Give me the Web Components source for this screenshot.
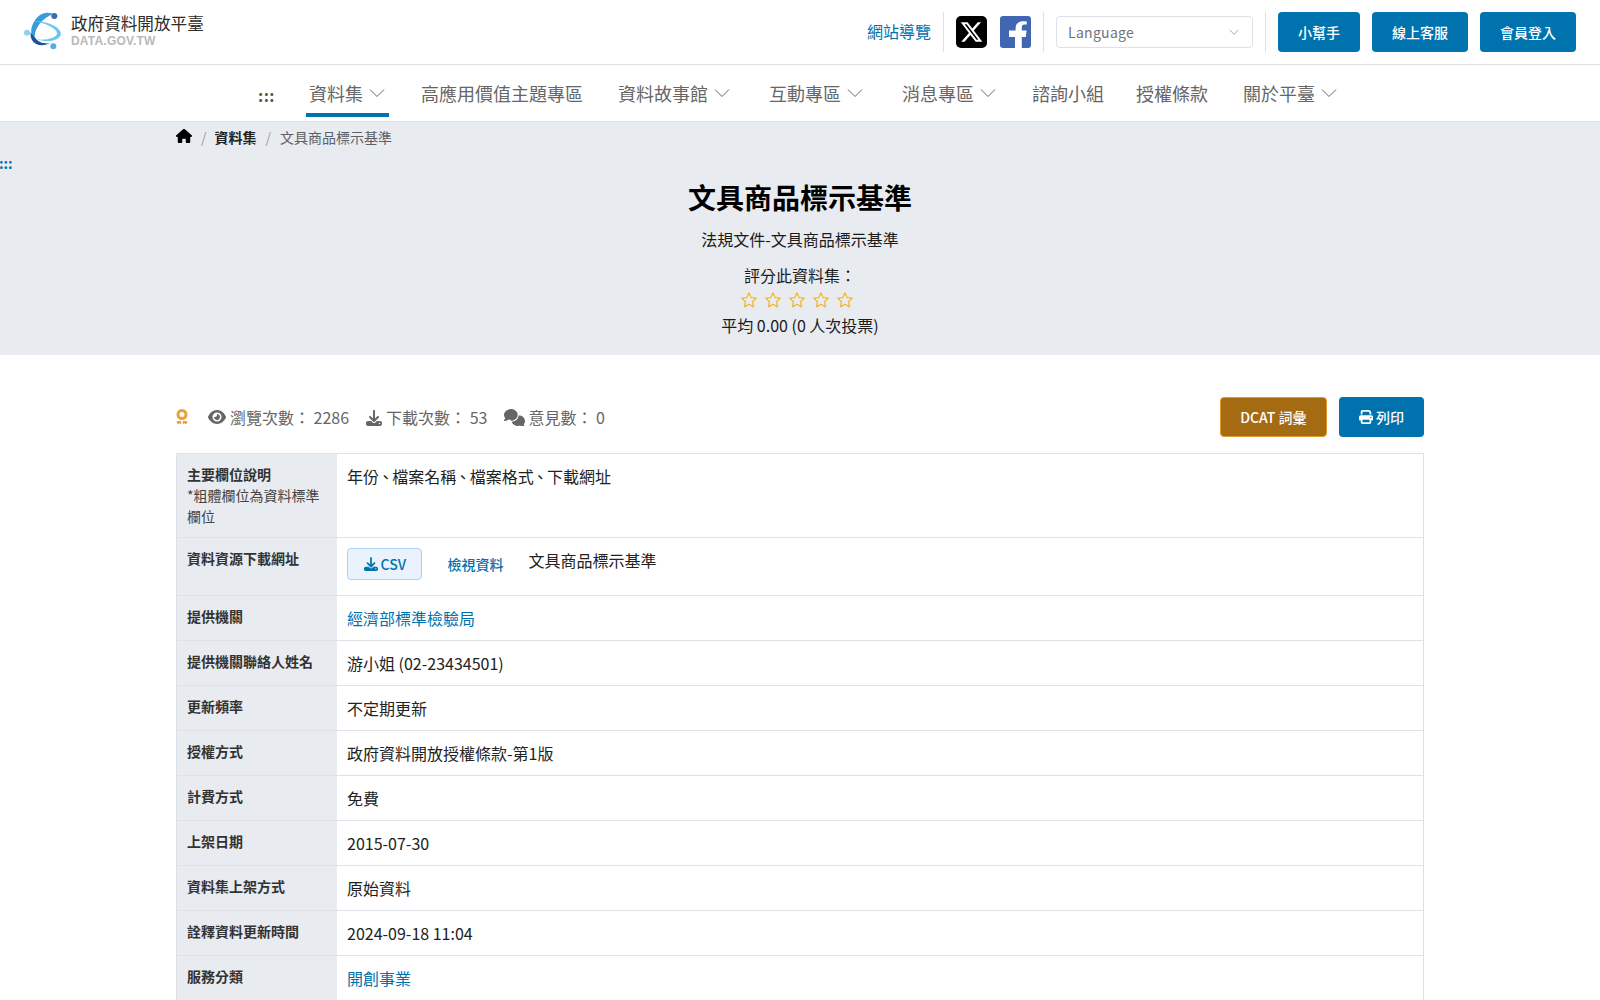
<!DOCTYPE html>
<html lang="zh-Hant">
<head>
<meta charset="utf-8">
<title>文具商品標示基準</title>
<style>
  html, body { margin: 0; padding: 0; background: #fff; overflow: hidden; }
  body { font-family: "Noto Sans CJK TC", "Noto Sans", sans-serif; font-size: 16px; line-height: 24px; color: #1b1b1b; }
  .tight { margin: 0 -1.35px; }
</style>
</head>
<body>
<site-header></site-header>
<site-nav>
  <nav-item caret active>資料集</nav-item>
  <nav-item gap="32">高應用價值主題專區</nav-item>
  <nav-item gap="35" caret>資料故事館</nav-item>
  <nav-item gap="39" caret>互動專區</nav-item>
  <nav-item gap="39" caret>消息專區</nav-item>
  <nav-item gap="36">諮詢小組</nav-item>
  <nav-item gap="32">授權條款</nav-item>
  <nav-item gap="35" caret>關於平臺</nav-item>
</site-nav>
<page-hero title="文具商品標示基準" subtitle="法規文件-文具商品標示基準"></page-hero>
<main-body>
  <stat-bar></stat-bar>
  <data-table>
    <data-row label="主要欄位說明" note="*粗體欄位為資料標準欄位">年份<span class="tight">、</span>檔案名稱<span class="tight">、</span>檔案格式<span class="tight">、</span>下載網址</data-row>
    <data-row label="資料資源下載網址"><resource-links></resource-links></data-row>
    <data-row label="提供機關"><a-link>經濟部標準檢驗局</a-link></data-row>
    <data-row label="提供機關聯絡人姓名">游小姐 (02-23434501)</data-row>
    <data-row label="更新頻率">不定期更新</data-row>
    <data-row label="授權方式">政府資料開放授權條款-第1版</data-row>
    <data-row label="計費方式">免費</data-row>
    <data-row label="上架日期">2015-07-30</data-row>
    <data-row label="資料集上架方式">原始資料</data-row>
    <data-row label="詮釋資料更新時間">2024-09-18 11:04</data-row>
    <data-row label="服務分類"><a-link>開創事業</a-link></data-row>
  </data-table>
</main-body>

<script>
const DOWNLOAD_ICON = `<svg viewBox="0 0 512 512" fill="currentColor" aria-hidden="true"><path d="M288 32c0-17.700-14.300-32-32-32s-32 14.300-32 32V274.700l-73.400-73.400c-12.500-12.500-32.800-12.500-45.300 0s-12.500 32.800 0 45.300l128 128c12.500 12.500 32.800 12.500 45.300 0l128-128c12.500-12.500 12.500-32.800 0-45.300s-32.800-12.500-45.300 0L288 274.700V32zM64 352c-35.300 0-64 28.700-64 64v32c0 35.300 28.700 64 64 64H448c35.300 0 64-28.700 64-64V416c0-35.300-28.700-64-64-64H346.500l-45.300 45.300c-25 25-65.500 25-90.500 0L165.500 352H64zm368 56a24 24 0 1 1 0 48 24 24 0 1 1 0-48z"/></svg>`;

class SiteHeader extends HTMLElement {
  constructor() {
    super();
    this.attachShadow({mode: "open"}).innerHTML = `
      <style>
        :host { display: flex; align-items: center; height: 65px; box-sizing: border-box; border-bottom: 1px solid #dfe1e8; padding: 0 24px; background: #fff; }
        .logo { display: flex; align-items: center; gap: 7px; flex: 1; margin-top: -4px; }
        .logo svg { width: 40px; height: 38px; margin-top: 2px; }
        .name { font-size: 16.6px; line-height: 20px; color: #2d2a28; white-space: nowrap; }
        .en { font-family: "Liberation Sans", sans-serif; font-weight: 700; font-size: 12px; line-height: 13px; margin-top: 2px; color: #b9b9b9; letter-spacing: .2px; }
        .map { color: #0072ad; margin-right: 12px; margin-bottom: 2px; }
        .sep { width: 1px; height: 40px; background: #dfe1e8; }
        .social { display: flex; gap: 13px; margin: 0 12px; }
        .social svg { width: 31px; height: 32px; display: block; }
        .select { width: 197px; height: 32px; box-sizing: border-box; border: 1px solid #dfe1e8; border-radius: 4px; display: flex; align-items: center; justify-content: space-between; padding: 0 12px 0 11px; font-size: 14px; color: #70757c; margin: 0 12px; letter-spacing: .3px; }
        .select svg { width: 12px; height: 12px; }
        .btn { height: 40px; background: #0072ad; color: #fff; font-size: 14px; font-weight: 500; border-radius: 4px; padding: 0 20px; display: flex; align-items: center; margin-left: 12px; }
      </style>
      <div class="logo">
        <svg viewBox="24 18 120 114">
          <path d="M112 24C85 12 60 28 48 60 43 76 46 90 56 100 54 85 60 68 72 52 82 40 95 30 112 24Z" fill="#3b9ad8"/>
          <path d="M44 78C40 108 65 128 102 112 82 114 66 108 58 96 52 90 47 85 44 78Z" fill="#1c4fa0"/>
          <path d="M52 45C90 45 140 62 134 88 128 106 90 110 60 100 90 104 124 96 123 82 122 66 85 50 52 45Z" fill="#6cc8ea"/>
          <circle cx="115" cy="30" r="9" fill="#3a6cb8"/>
          <circle cx="33" cy="80" r="9" fill="#8ad2f2"/>
          <circle cx="112" cy="121" r="9" fill="#55aee6"/>
        </svg>
        <div>
          <div class="name">政府資料開放平臺</div>
          <div class="en">DATA.GOV.TW</div>
        </div>
      </div>
      <span class="map">網站導覽</span>
      <span class="sep"></span>
      <div class="social">
        <svg viewBox="0 0 31 32"><rect width="31" height="32" rx="5" fill="#000"/><path transform="translate(3.500 4)" d="M18.244 2.250h3.308l-7.227 8.260 8.502 11.240H16.170l-5.214-6.817L4.990 21.750H1.680l7.730-8.835L1.254 2.250H8.080l4.713 6.231zm-1.161 17.520h1.833L7.084 4.126H5.117z" fill="#fff"/></svg>
        <svg viewBox="0 0 31 32"><rect width="31" height="32" rx="3" fill="#4267b2"/><path d="M21.800 32V21h4l.8-6.500h-4.800v-3c0-1.700.6-3 3-3h2V5.500c-.6-.1-2.300-.3-4-.3-4.300 0-7.200 2.500-7.200 7.200v2.100H9V21h6v11z" fill="#fff"/></svg>
      </div>
      <span class="sep"></span>
      <div class="select">Language
        <svg viewBox="0 0 16 16" fill="none" stroke="#9aa0a8" stroke-width="1.200"><path d="M2 5l6 6 6-6"/></svg>
      </div>
      <span class="sep"></span>
      <span class="btn">小幫手</span>
      <span class="btn">線上客服</span>
      <span class="btn">會員登入</span>`;
  }
}

class SiteNav extends HTMLElement {
  constructor() {
    super();
    this.attachShadow({mode: "open"}).innerHTML = `
      <style>
        :host { display: flex; justify-content: center; height: 57px; box-sizing: border-box; border-bottom: 1px solid #dfe1e8; background: #fff; padding-right: 5px; }
        .dots { color: #555; align-self: center; font-size: 16px; font-weight: 700; margin-right: 31px; margin-top: 3px; letter-spacing: .5px; }
      </style>
      <span class="dots">:::</span>
      <slot></slot>`;
  }
}

class NavItem extends HTMLElement {
  constructor() {
    super();
    const gap = this.getAttribute("gap") || 0;
    this.attachShadow({mode: "open"}).innerHTML = `
      <style>
        :host { display: flex; align-items: center; height: 48px; margin-left: ${gap}px; font-size: 18px; color: #666; position: relative; padding-top: 4px; padding-bottom: 0; white-space: nowrap; align-self: flex-start; }
        svg { width: 16px; height: 16px; margin-left: 6px; }
        :host([active]) { padding-left: 3px; padding-right: 4px; }
        :host([active])::after { content: ""; position: absolute; left: 0; right: 0; bottom: 0; height: 4px; background: #0072ad; }
      </style>
      <slot></slot>
      ${this.hasAttribute("caret") ? `<svg viewBox="0 0 16 16" fill="none" stroke="#666" stroke-width="1"><path d="M1 4.500l7 7 7-7"/></svg>` : ""}`;
  }
}

class PageHero extends HTMLElement {
  constructor() {
    super();
    const star = `<svg viewBox="0 0 24 24" fill="none" stroke="#f5b82e" stroke-width="1.700" stroke-linejoin="round"><path d="M12 2.500l2.900 6.300 6.800.8-5 4.700 1.300 6.800-6-3.400-6 3.400 1.300-6.800-5-4.700 6.800-.8z"/></svg>`;
    this.attachShadow({mode: "open"}).innerHTML = `
      <style>
        :host { display: block; height: 233px; background: #e8ebf0; position: relative; text-align: center; color: #1b1b1b; }
        .crumbs { width: 1248px; margin: 0 auto; height: 30px; display: flex; align-items: center; gap: 8px; font-size: 14px; color: #5c6066; }
        .crumbs svg { width: 16px; height: 16px; color: #000; display: block; margin-top: -2px; }
        .crumbs b { color: #222; font-weight: 700; }
        .crumbs i { color: #9a9ea4; font-style: normal; margin: 0 1px; }
        .crumbs i:first-of-type { margin-right: 0; }
        .dots { position: absolute; left: -1px; top: 29px; color: #0072ad; font-size: 14px; line-height: 24px; font-weight: 700; }
        h1 { margin: 25px 0 0; font-size: 28px; line-height: 40px; font-weight: 700; color: #000; }
        p { margin: 0; }
        .sub { margin-top: 10px; line-height: 24px; }
        .rate { margin-top: 12px; }
        .stars { display: flex; justify-content: center; gap: 6px; height: 26px; align-items: center; padding-right: 6px; }
        .stars svg { width: 18px; height: 18px; }
      </style>
      <div class="crumbs">
        <svg viewBox="0 0 576 512" fill="currentColor"><path d="M575.800 255.500c0 18-15 32.100-32 32.100h-32l.7 160.200c0 2.700-.2 5.400-.5 8.100V472c0 22.100-17.900 40-40 40H456c-1.100 0-2.200 0-3.300-.1-1.400.1-2.800.1-4.200.1H416 392c-22.100 0-40-17.900-40-40V448 384c0-17.700-14.300-32-32-32H256c-17.700 0-32 14.300-32 32v64 24c0 22.100-17.900 40-40 40H160 128.100c-1.500 0-3-.1-4.500-.2-1.200.1-2.400.2-3.600.2H104c-22.100 0-40-17.900-40-40V360c0-.9 0-1.900.1-2.800V287.600H32c-18 0-32-14-32-32.100 0-9 3-17 10-24L266.400 8c7-7 15-8 22-8s15 2 21 7L564.800 231.500c8 7 12 15 11 24z"/></svg>
        <i>/</i><b>資料集</b><i>/</i><span>${this.getAttribute("title")}</span>
      </div>
      <span class="dots">:::</span>
      <h1>${this.getAttribute("title")}</h1>
      <p class="sub">${this.getAttribute("subtitle")}</p>
      <p class="rate">評分此資料集：</p>
      <div class="stars">${star.repeat(5)}</div>
      <p>平均 0.00 (0 人次投票)</p>`;
  }
}

class MainBody extends HTMLElement {
  constructor() {
    super();
    this.attachShadow({mode: "open"}).innerHTML = `
      <style>
        :host { display: block; width: 1248px; margin: 42px auto 0; }
      </style>
      <slot></slot>`;
  }
}

class StatBar extends HTMLElement {
  constructor() {
    super();
    this.attachShadow({mode: "open"}).innerHTML = `
      <style>
        :host { display: flex; align-items: center; height: 40px; color: #666; margin-bottom: 16px; }
        .stat { display: flex; align-items: center; white-space: nowrap; }
        svg { display: block; }
        .medal { width: 12px; height: 16px; margin-right: 20px; color: #e9a23b; }
        .eye { width: 18px; height: 14px; margin-right: 4px; }
        .dl { width: 16px; height: 16px; margin: 1px 4px 0 0; }
        .chat { width: 21px; height: 17px; margin-right: 3px; }
        .gap { margin-left: 17px; }
        .right { margin-left: auto; display: flex; gap: 12px; }
        .btn { height: 40px; box-sizing: border-box; border-radius: 4px; color: #fff; font-size: 14px; font-weight: 500; display: flex; align-items: center; padding: 0 20px; }
        .dcat { background: #a56b13; border: 1px solid #e0982c; padding: 0 19.500px; }
        .print { background: #0072ad; gap: 3px; }
        .print svg { width: 14px; height: 14px; }
      </style>
      <svg class="medal" viewBox="0 0 12 16" fill="none"><circle cx="6" cy="5.500" r="4" stroke="currentColor" stroke-width="3"/><path d="M.5 12.300l4.700-.5v3.700l-1.500-1.300-2 1.300zM11.500 12.300l-4.700-.5v3.700l1.500-1.300 2 1.300z" fill="currentColor"/></svg>
      <span class="stat">
        <svg class="eye" viewBox="0 0 576 448" fill="currentColor"><path d="M288 0C207 0 142 37 95 81 48 124 17 176 2 212c-3 8-3 17 0 25 15 36 46 88 93 131 47 44 112 80 193 80s146-36 193-80c47-43 78-95 93-131 3-8 3-17 0-25-15-36-46-88-93-131C434 37 369 0 288 0zM144 224a144 144 0 1 1 288 0 144 144 0 1 1-288 0zm144-64c0 35-29 64-64 64-7 0-14-1-20-3-6-2-12 1-12 7 0 7 1 14 3 21 14 51 67 82 118 68s82-67 68-118c-11-42-48-70-89-72-6 0-9 6-7 12 2 6 3 14 3 21z"/></svg>
        瀏覽次數： 2286</span>
      <span class="stat gap"><span class="dl">${DOWNLOAD_ICON}</span>下載次數： 53</span>
      <span class="stat gap">
        <svg class="chat" viewBox="0 0 640 512" fill="currentColor"><path d="M208 352c115 0 208-79 208-176S323 0 208 0 0 79 0 176c0 38 14 74 39 103-4 9-8 18-13 26-9 14-21 28-21 28-5 5-6 13-3 19s9 11 16 11c29 0 58-9 82-20 19-9 35-20 47-28 20 6 40 9 61 9zm240-176c0 112-99 196-216 207 24 74 104 129 200 129 21 0 41-3 60-9 13 8 29 19 48 28 24 11 53 20 82 20 7 0 13-4 16-10s1-14-3-19c0 0-12-14-21-28-5-8-9-17-13-26 24-29 39-65 39-103 0-92-84-168-191-175 1 2 1 4 1 6z"/></svg>
        意見數： 0</span>
      <div class="right">
        <span class="btn dcat">DCAT 詞彙</span>
        <span class="btn print"><svg viewBox="0 0 512 512" fill="currentColor"><path d="M128 0C93 0 64 29 64 64v96h64V64h227l29 29v67h64V93c0-17-7-33-19-45L403 19C391 7 375 0 358 0H128zM384 352v96H128v-96h256zm64 32h32c18 0 32-14 32-32v-96c0-35-29-64-64-64H64c-35 0-64 29-64 64v96c0 18 14 32 32 32h32v64c0 35 29 64 64 64h256c35 0 64-29 64-64v-64zm-16-136a24 24 0 1 1 0 48 24 24 0 1 1 0-48z"/></svg>列印</span>
      </div>`;
  }
}

class DataTable extends HTMLElement {
  constructor() {
    super();
    this.attachShadow({mode: "open"}).innerHTML = `
      <style>
        :host { display: block; border: 1px solid #dfe1e8; border-bottom: 0; box-sizing: border-box; }
      </style>
      <slot></slot>`;
  }
}

class DataRow extends HTMLElement {
  constructor() {
    super();
    const note = this.getAttribute("note");
    this.attachShadow({mode: "open"}).innerHTML = `
      <style>
        :host { display: grid; grid-template-columns: 160px 1fr; border-bottom: 1px solid #dfe1e8; }
        .th { background: #e8ebf0; padding: 10px 10px; font-size: 14px; line-height: 21px; color: #444; }
        .th b { font-weight: 700; color: #333; display: block; }
        .td { padding: 10px; color: #222; }
      </style>
      <div class="th"><b>${this.getAttribute("label")}</b>${note ? note : ""}</div>
      <div class="td"><slot></slot></div>`;
  }
}

class ALink extends HTMLElement {
  constructor() {
    super();
    this.attachShadow({mode: "open"}).innerHTML = `
      <style>:host { display: inline; color: #0072ad; }</style><slot></slot>`;
  }
}

class ResourceLinks extends HTMLElement {
  constructor() {
    super();
    this.attachShadow({mode: "open"}).innerHTML = `
      <style>
        :host { display: flex; align-items: flex-start; padding-bottom: 5px; }
        .csv { height: 32px; box-sizing: border-box; display: flex; align-items: center; gap: 3px; padding: 0 15.500px; background: #eaf3fd; border: 1px solid #a9d2f0; border-radius: 4px; color: #0072ad; font-size: 14px; font-weight: 500; }
        .csv span { width: 14px; height: 14px; display: block; }
        .csv svg { display: block; }
        .view { color: #0072ad; font-size: 14px; font-weight: 500; margin: 4px 25px 0; }
        .name { color: #222; }
      </style>
      <span class="csv"><span>${DOWNLOAD_ICON}</span>CSV</span>
      <span class="view">檢視資料</span>
      <span class="name">文具商品標示基準</span>`;
  }
}

customElements.define("site-header", SiteHeader);
customElements.define("site-nav", SiteNav);
customElements.define("nav-item", NavItem);
customElements.define("page-hero", PageHero);
customElements.define("main-body", MainBody);
customElements.define("stat-bar", StatBar);
customElements.define("data-table", DataTable);
customElements.define("data-row", DataRow);
customElements.define("a-link", ALink);
customElements.define("resource-links", ResourceLinks);
</script>
</body>
</html>
